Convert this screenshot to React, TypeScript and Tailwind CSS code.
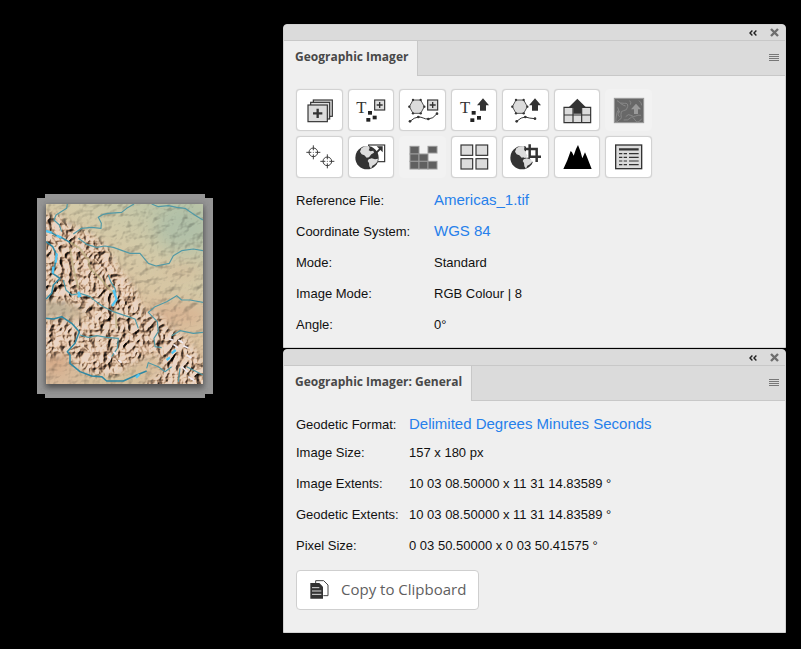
import type { ReactNode } from "react";

const INK = "#333333";
const PALE = "#dcdcdc";

function PlusBox({ x, y }: { x: number; y: number }) {
  return (
    <g stroke={INK} fill="none">
      <rect x={x + 1} y={y + 1} width="30" height="30" fill={PALE} strokeWidth="3.5" />
      <path d={`M${x + 7} ${y + 16}h18M${x + 16} ${y + 7}v18`} strokeWidth="4" />
    </g>
  );
}

function LetterT({ x }: { x: number }) {
  return (
    <text x={x} y="71" fontSize="50" fontFamily="'Liberation Serif', serif" fontWeight="400" fill={INK}>
      T
    </text>
  );
}

function Dots({ points }: { points: [number, number][] }) {
  return (
    <g fill="#222">
      {points.map(([x, y]) => (
        <rect key={`${x}-${y}`} x={x} y={y} width="12" height="11" />
      ))}
    </g>
  );
}

function UpArrow({ x, y }: { x: number; y: number }) {
  return <path d={`M${x} ${y}l18 21h-9v16h-18v-16h-9z`} fill={INK} />;
}

const HEX: [number, number][] = [
  [40, 32],
  [63, 32],
  [74, 52],
  [63, 72],
  [40, 72],
  [29, 52],
];

function Hexagon() {
  return (
    <g>
      <polygon points={HEX.join(" ")} fill={PALE} stroke={INK} strokeWidth="2.5" />
      {HEX.map(([x, y]) => (
        <circle key={`${x}-${y}`} cx={x} cy={y} r="3.5" fill={INK} />
      ))}
    </g>
  );
}

function Curve({ d, points }: { d: string; points: [number, number][] }) {
  return (
    <g>
      <path d={d} fill="none" stroke={INK} strokeWidth="3" />
      {points.map(([x, y]) => (
        <circle key={`${x}-${y}`} cx={x} cy={y} r="4" fill={INK} />
      ))}
    </g>
  );
}

function Crosshair({ x, y }: { x: number; y: number }) {
  return (
    <g fill="none" stroke={INK} strokeWidth="2.8">
      <circle cx={x} cy={y} r="13" />
      <path d={`M${x - 21} ${y}h15M${x + 6} ${y}h15M${x} ${y - 21}v15M${x} ${y + 6}v15`} />
      <circle cx={x} cy={y} r="1.5" fill={INK} stroke="none" />
    </g>
  );
}

function Globe() {
  return (
    <g>
      <circle cx="58" cy="64" r="35" fill={INK} />
      <path
        d="M41 36l10-6 12-1 3 6-3 7 6 3 8-2 2 6-8 5-7 9-7 1-7-7-8-3-5-8zM63 69l9-3 10 3 9-2-2 9-7 8-8 4-4 9-5-7-1-10-4-6z"
        fill={PALE}
      />
    </g>
  );
}

type Tool = { label: string; disabled?: boolean; icon: ReactNode };

const TOOLS: Tool[] = [
  {
    label: "Add maps",
    icon: (
      <g fill={PALE} stroke={INK} strokeWidth="3.5">
        <rect x="50" y="32" width="57" height="49" />
        <rect x="42" y="39" width="57" height="50" />
        <rect x="34" y="47" width="58" height="50" />
        <path d="M49 72h28M63 58v28" strokeWidth="7" />
      </g>
    ),
  },
  {
    label: "Add text points",
    icon: (
      <g>
        <LetterT x={26} />
        <PlusBox x={80} y={31} />
        <Dots points={[[61, 65], [75, 79], [56, 86]]} />
      </g>
    ),
  },
  {
    label: "Add shapes",
    icon: (
      <g>
        <Hexagon />
        <PlusBox x={83} y={31} />
        <Curve
          d="M31 96Q44 84 56 83C68 82 73 90 86 89Q100 89 112 73"
          points={[[31, 96], [56, 83], [86, 89], [112, 73]]}
        />
      </g>
    ),
  },
  {
    label: "Export text points",
    icon: (
      <g>
        <LetterT x={25} />
        <UpArrow x={94} y={27} />
        <Dots points={[[60, 65], [76, 80], [56, 87]]} />
      </g>
    ),
  },
  {
    label: "Export shapes",
    icon: (
      <g>
        <Hexagon />
        <UpArrow x={97} y={27} />
        <Curve d="M42 96Q56 83 68 83Q80 87 97 88" points={[[42, 96], [68, 83], [97, 88]]} />
      </g>
    ),
  },
  {
    label: "Export grid",
    icon: (
      <g>
        <path d="M28 54h80v46h-80zM28 77h80M55 54v46M81 54v46" fill={PALE} stroke={INK} strokeWidth="3.5" />
        <path d="M68 28l25 25h-13v20h-24v-20h-13z" fill={INK} />
      </g>
    ),
  },
  {
    label: "Terrain shader",
    disabled: true,
    icon: (
      <g fill="none" stroke="#8e8e8e" strokeWidth="2.5">
        <rect x="26" y="27" width="88" height="73" fill="#686868" stroke="#9a9a9a" strokeWidth="3" />
        <path d="M34 34q10 10 22 8t10 10-12 12-8 12 0 12-10 8-4-16 8-14-4-12M44 42q12 8 16 8M40 66q-6 12 2 16M60 82q8-10 16-4t14 2 16-2M54 92q14 2 20-6t14 6 20-4M72 34q6 6 2 12M100 34q8 6 8 14" />
        <path d="M91 43l15 17h-9v14h-12v-14h-9z" fill="#9a9a9a" stroke="none" />
      </g>
    ),
  },
  {
    label: "Georeference",
    icon: (
      <g>
        <Crosshair x={50} y={48} />
        <Crosshair x={92} y={75} />
      </g>
    ),
  },
  {
    label: "Transform",
    icon: (
      <g>
        <rect x="63" y="26" width="48" height="50" fill="#fff" stroke={INK} strokeWidth="3.5" />
        <Globe />
        <path d="M86 49l13-13" stroke={INK} strokeWidth="6" />
        <path d="M87 30h18v18z" fill={INK} />
      </g>
    ),
  },
  {
    label: "Mosaic",
    disabled: true,
    icon: (
      <g fill="#606060" stroke="#999" strokeWidth="3">
        <rect x="31" y="30" width="27" height="23" />
        <rect x="85" y="30" width="27" height="20" />
        <rect x="31" y="53" width="27" height="22" />
        <rect x="58" y="53" width="27" height="22" />
        <rect x="31" y="75" width="27" height="23" />
        <rect x="58" y="75" width="27" height="23" />
        <rect x="85" y="75" width="27" height="23" />
      </g>
    ),
  },
  {
    label: "Tile",
    icon: (
      <g fill={PALE} stroke={INK} strokeWidth="3.5">
        <rect x="28" y="26" width="35" height="31" />
        <rect x="73" y="26" width="35" height="31" />
        <rect x="28" y="67" width="35" height="31" />
        <rect x="73" y="67" width="35" height="31" />
      </g>
    ),
  },
  {
    label: "Crop by extent",
    icon: (
      <g>
        <Globe />
        <path d="M70 16h54v66h-30l-14-18h-10z" fill="#fff" />
        <path d="M52 34h13l2 14 8 10-8 8-12-9-9-4z" fill={PALE} />
        <path d="M65 38h37v39M81 24v37h34" fill="none" stroke={INK} strokeWidth="7.5" />
      </g>
    ),
  },
  {
    label: "Digital elevation model",
    icon: (
      <path
        d="M26 98L38 72L48 44L52 48L57 58L64 38L70 26L77 44L83 66L91 48L97 62L104 80L111 98z"
        fill="#000"
      />
    ),
  },
  {
    label: "Attributes table",
    icon: (
      <g fill="none" stroke={INK}>
        <rect x="30" y="26" width="78" height="71" fill={PALE} strokeWidth="4" />
        <path d="M40 39h59" strokeWidth="7" />
        <path
          d="M40 52h10M54 52h10M70 52h29M40 63h10M54 63h10M70 63h29M40 74h10M54 74h10M70 74h29M40 85h10M54 85h10M70 85h29"
          strokeWidth="3.5"
        />
      </g>
    ),
  },
];

function Toolbar() {
  return (
    <div className="grid w-[356px] grid-cols-7 gap-[5px]">
      {TOOLS.map((tool) => (
        <button
          key={tool.label}
          type="button"
          aria-label={tool.label}
          disabled={tool.disabled}
          className="flex h-[42px] items-center justify-center rounded-[4px] border border-[#d2d2d2] bg-white shadow-[0_0_1px_#c8c8c8] disabled:border-[#f2f2f2] disabled:bg-[#f2f2f2] disabled:shadow-none"
        >
          <svg viewBox="1 2 135 120" className="h-10 w-[45px] shrink-0" aria-hidden="true">
            {tool.icon}
          </svg>
        </button>
      ))}
    </div>
  );
}

function Panel({ title, children }: { title: string; children: ReactNode }) {
  return (
    <section className="overflow-hidden rounded-t-[4px] border border-[#d2d2d2] bg-[#efefef]">
      <div className="flex h-4 items-center justify-end gap-[13px] border-b border-[#c8c8c8] bg-[#dbdbdb] pr-[6px]">
        <button type="button" aria-label="Collapse panel">
          <svg viewBox="0 0 8 6" className="h-[6px] w-2" fill="none" stroke="#222" strokeWidth="1.4" aria-hidden="true">
            <path d="M3.4 .5L1 3l2.4 2.5M7.4 .5L5 3l2.4 2.5" />
          </svg>
        </button>
        <button type="button" aria-label="Close panel">
          <svg viewBox="0 0 9 9" className="h-[9px] w-[9px]" fill="none" stroke="#6e6e6e" strokeWidth="2.4" aria-hidden="true">
            <path d="M1 1l7 7M8 1L1 8" />
          </svg>
        </button>
      </div>
      <div className="flex h-[35px] bg-[#dbdbdb]">
        <h2 className="border-r border-[#c8c8c8] bg-[#efefef] pr-[9px] pl-[11px] font-['Open_Sans','Noto_Sans',sans-serif] text-[12px] leading-[31px] font-bold text-[#484848]">
          {title}
        </h2>
        <div className="flex flex-1 items-center justify-end border-b border-[#c8c8c8] pr-[6px] pb-[2px]">
          <button type="button" aria-label="Panel menu">
            <svg viewBox="0 0 10 7" className="h-[7px] w-[10px]" stroke="#777" aria-hidden="true">
              <path d="M0 .5h10M0 2.5h10M0 4.5h10M0 6.5h10" />
            </svg>
          </button>
        </div>
      </div>
      {children}
    </section>
  );
}

function Link({ children }: { children: ReactNode }) {
  return (
    <a href="#settings" className="text-[15px] text-[#2680eb]">
      {children}
    </a>
  );
}

function Row({ label, className, children }: { label: string; className: string; children: ReactNode }) {
  return (
    <div className={`grid items-center whitespace-nowrap ${className}`}>
      <dt>{label}</dt>
      <dd>{children}</dd>
    </div>
  );
}

const MAIN_ROW = "grid-cols-[138px_1fr]";
const GENERAL_ROW = "grid-cols-[113px_1fr]";

const MOUNTAINS =
  "M30 85L85 90L120 118L175 140L225 180L250 215L265 250L300 290L325 330L340 375L395 395L420 430L460 450L500 500L530 560V610H330L400 560L380 500L300 540L260 575L180 570L120 530L110 500L60 520L30 500V410L90 395L120 410L180 400L130 355L60 345L30 350Z";

const RIVERS = [
  "M112 57L110 70L78 90L72 105L88 120L95 140",
  "M130 147L155 130L185 127L213 130L214 115L205 97L220 88L235 85L275 82L290 70L312 57",
  "M145 160L170 178L200 187L225 183L250 187L300 205L330 205L355 235L378 243L418 235L430 212L455 197L490 192L519 197",
  "M365 57L385 65L415 62L440 67L465 70L480 80L500 94L519 105",
  "M100 285L108 315L125 330L150 325L180 335L205 355L220 365L250 380L285 392L315 402L325 430",
  "M519 352L480 345L455 345L440 332L410 350L375 365L355 382L382 410L385 440L372 460L375 485L395 488",
  "M150 450L175 457L200 452L230 457L265 460L262 490L245 515",
  "M425 452L450 437L490 445L519 442",
  "M235 270L242 290L255 310L258 325",
  "M350 550L355 533L385 545L405 560L425 545M450 550L445 590M470 545L519 570",
];

const MAIN_RIVERS = [
  "M48 138L65 143L75 150L95 158L120 172",
  "M48 170L68 185L80 210L75 240L68 265L90 280L70 300L65 325L48 342",
  "M48 400L70 402L95 395L125 415L148 440L135 475L112 500L120 510L120 535L150 560L185 573L215 575L230 588L280 588L320 570L350 558",
];

function MapWindow() {
  return (
    <svg viewBox="21 27 528 612" className="h-[204px] w-[176px]" role="img" aria-label="Shaded relief map">
      <defs>
        <linearGradient id="land" x1="0.75" y1="0" x2="0.2" y2="1">
          <stop offset="0" stopColor="#bcc5a8" />
          <stop offset="0.25" stopColor="#d3caa8" />
          <stop offset="0.5" stopColor="#dcc3a0" />
          <stop offset="1" stopColor="#d8bb9c" />
        </linearGradient>
        <clipPath id="sheet">
          <rect x="48" y="57" width="471" height="540" />
        </clipPath>
        <filter id="soft" x="-20%" y="-20%" width="140%" height="140%">
          <feGaussianBlur stdDeviation="10" />
        </filter>
        <filter id="patch" x="-50%" y="-50%" width="200%" height="200%">
          <feGaussianBlur stdDeviation="22" />
        </filter>
        <mask id="range">
          <path d={MOUNTAINS} fill="#fff" filter="url(#soft)" />
        </mask>
        <filter id="relief" x="0" y="0" width="100%" height="100%" colorInterpolationFilters="sRGB">
          <feTurbulence type="turbulence" baseFrequency="0.034 0.03" numOctaves="3" seed="12" result="noise" />
          <feColorMatrix in="noise" type="matrix" values="0 0 0 0 0  0 0 0 0 0  0 0 0 0 0  -1.5 0 0 0 1" />
          <feDiffuseLighting surfaceScale="6" diffuseConstant="1.3" lightingColor="#fff0e4">
            <feDistantLight azimuth="215" elevation="48" />
          </feDiffuseLighting>
        </filter>
        <filter id="plains" x="0" y="0" width="100%" height="100%" colorInterpolationFilters="sRGB">
          <feTurbulence type="fractalNoise" baseFrequency="0.03 0.045" numOctaves="3" seed="3" result="noise" />
          <feColorMatrix in="noise" type="matrix" values="0 0 0 0 0  0 0 0 0 0  0 0 0 0 0  1 0 0 0 0" />
          <feDiffuseLighting surfaceScale="3" diffuseConstant="1.3" lightingColor="#ffffff">
            <feDistantLight azimuth="215" elevation="50" />
          </feDiffuseLighting>
        </filter>
      </defs>
      <path d="M45 27H525V39H549V627H525V639H45V627H21V39H45Z" fill="#959595" />
      <rect x="46" y="62" width="475" height="547" fill="#333" opacity="0.7" filter="url(#soft)" />
      <g clipPath="url(#sheet)">
        <rect x="48" y="57" width="471" height="540" fill="url(#land)" />
        <g filter="url(#patch)">
          <ellipse cx="455" cy="130" rx="80" ry="65" fill="#abbda8" opacity="0.7" />
          <ellipse cx="85" cy="370" rx="60" ry="22" fill="#b3ab96" />
          <ellipse cx="440" cy="390" rx="100" ry="35" fill="#d8b090" opacity="0.8" />
          <ellipse cx="460" cy="260" rx="70" ry="14" fill="#dcb391" opacity="0.7" />
          <ellipse cx="250" cy="580" rx="110" ry="15" fill="#cfc39a" />
          <ellipse cx="75" cy="520" rx="40" ry="50" fill="#d6aa88" />
        </g>
        <rect x="48" y="57" width="471" height="540" filter="url(#plains)" className="mix-blend-multiply" />
        <g mask="url(#range)">
          <rect x="48" y="57" width="471" height="540" fill="#d9b396" opacity="0.9" />
          <rect x="48" y="57" width="471" height="540" filter="url(#relief)" className="mix-blend-multiply" />
          <rect x="48" y="57" width="471" height="540" filter="url(#relief)" opacity="0.4" className="mix-blend-overlay" />
        </g>
        <g fill="none" stroke="#b9ad7f" strokeWidth="6" opacity="0.7" strokeLinejoin="round">
          <path d="M120 172L150 190L175 225L180 250L215 285L250 325M120 190L130 250L145 310M255 370L260 430" />
        </g>
        <g fill="none" stroke="#5199a6" strokeWidth="3.5" strokeLinejoin="round">
          {RIVERS.map((d) => (
            <path key={d} d={d} />
          ))}
        </g>
        <g fill="none" stroke="#2f88a3" strokeWidth="4.5" strokeLinejoin="round">
          {MAIN_RIVERS.map((d) => (
            <path key={d} d={d} />
          ))}
        </g>
        <g fill="none" stroke="#52c6f3" strokeWidth="7">
          <path d="M48 138l17 5M80 205l-3 28M70 245l-2 20M145 320l6 16M250 315l10 28-14 20M143 335l10-6M410 525l10-8M425 505l12-10M318 578l10-10M80 152l14 6" />
        </g>
        <path
          d="M445 465l14 8M460 482l15 7M418 462l12 4M470 510l14 9M430 478l14 10M455 545l18 16M475 575l18 12M250 500l8 8M265 525l10 8M235 515l8 6"
          stroke="#efebf2"
          strokeWidth="5"
        />
      </g>
    </svg>
  );
}

export default function App() {
  return (
    <main className="flex min-h-screen bg-black font-['Liberation_Sans',Arial,sans-serif] text-[13px] text-[#111]">
      <div className="w-[283px] shrink-0 pt-[194px] pl-[37px]">
        <MapWindow />
      </div>
      <div className="flex flex-1 flex-col gap-px pt-6 pr-[15px] pb-4">
        <Panel title="Geographic Imager">
          <div className="px-3 pt-[13px] pb-[7px]">
            <Toolbar />
            <dl className="mt-[7px] leading-[30px]">
              <Row className={MAIN_ROW} label="Reference File:">
                <Link>Americas_1.tif</Link>
              </Row>
              <Row className={MAIN_ROW} label="Coordinate System:">
                <Link>WGS 84</Link>
              </Row>
              <Row className={`${MAIN_ROW} leading-[31px]`} label="Mode:">
                Standard
              </Row>
              <Row className={`${MAIN_ROW} leading-[31px]`} label="Image Mode:">
                RGB Colour | 8
              </Row>
              <Row className={`${MAIN_ROW} leading-[31px]`} label="Angle:">
                0°
              </Row>
            </dl>
          </div>
        </Panel>
        <Panel title="Geographic Imager: General">
          <div className="px-3 pt-[11px] pb-[22px]">
            <dl className="leading-[31px]">
              <Row className={`${GENERAL_ROW} leading-[24px]`} label="Geodetic Format:">
                <Link>Delimited Degrees Minutes Seconds</Link>
              </Row>
              <Row className={GENERAL_ROW} label="Image Size:">
                157 x 180 px
              </Row>
              <Row className={GENERAL_ROW} label="Image Extents:">
                10 03 08.50000 x 11 31 14.83589 °
              </Row>
              <Row className={GENERAL_ROW} label="Geodetic Extents:">
                10 03 08.50000 x 11 31 14.83589 °
              </Row>
              <Row className={GENERAL_ROW} label="Pixel Size:">
                0 03 50.50000 x 0 03 50.41575 °
              </Row>
            </dl>
            <button
              type="button"
              className="mt-[9px] flex h-10 items-center gap-3 rounded-[4px] border border-[#cfcfcf] bg-white pr-3 pb-[2px] pl-[13px] font-['Open_Sans','Noto_Sans',sans-serif] text-[15px] font-medium text-[#5f5f5f]"
            >
              <svg viewBox="0 0 57 57" className="h-[19px] w-[19px]" aria-hidden="true">
                <path d="M17 10V2h24l13 13v32H40" fill="#fff" stroke="#444" strokeWidth="3" />
                <path d="M1 9h27l11 11v36H1z" fill={INK} />
                <path d="M6 23h22M6 33h28M6 43h28" stroke="#fff" strokeWidth="2.5" />
              </svg>
              Copy to Clipboard
            </button>
          </div>
        </Panel>
      </div>
    </main>
  );
}
